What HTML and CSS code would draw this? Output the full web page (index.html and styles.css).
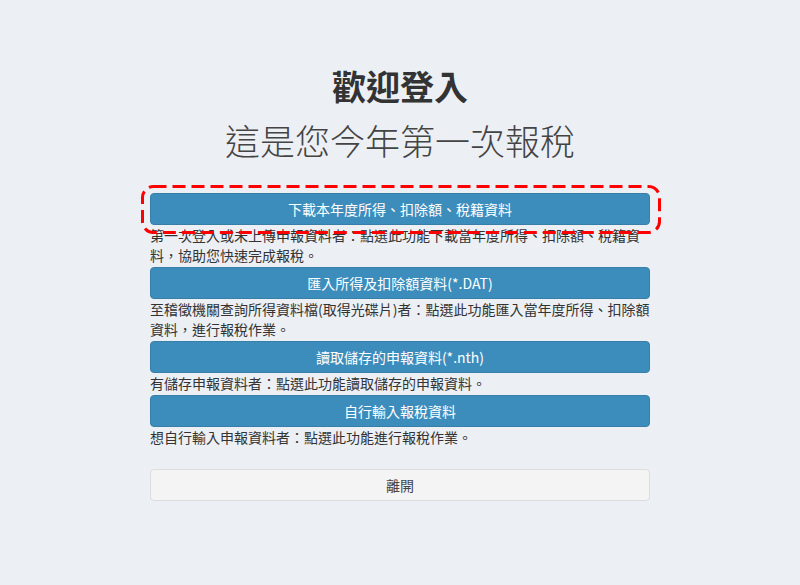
FILE: index.html
```html
<!DOCTYPE html>
<html lang="zh-Hant">
<head>
    <meta charset="UTF-8">
    <meta name="viewport" content="width=device-width, initial-scale=1.0">
    <title>歡迎登入</title>
    <link rel="stylesheet" href="styles.css">
</head>
<body>
    <main class="welcome">
        <h1 class="welcome-title">歡迎登入</h1>
        <h2 class="welcome-sub">這是您今年第一次報稅</h2>

        <section class="choices">
            <div class="choice-highlight">
                <button class="btn btn-primary">下載本年度所得、扣除額、稅籍資料</button>
                <!-- dashed ring marking the recommended option -->
                <svg class="highlight-ring" viewBox="0 0 520 49" preserveAspectRatio="none">
                    <rect x="1.5" y="1.5" width="517" height="46" rx="11" ry="11"
                          fill="none" stroke="#f00" stroke-width="3" stroke-dasharray="13 6"/>
                </svg>
            </div>
            <p class="choice-desc">第一次登入或未上傳申報資料者：點選此功能下載當年度所得、扣除額、稅籍資料，協助您快速完成報稅。</p>

            <button class="btn btn-primary">匯入所得及扣除額資料(*.DAT)</button>
            <p class="choice-desc">至稽徵機關查詢所得資料檔(取得光碟片)者：點選此功能匯入當年度所得、扣除額資料，進行報稅作業。</p>

            <button class="btn btn-primary">讀取儲存的申報資料(*.nth)</button>
            <p class="choice-desc">有儲存申報資料者：點選此功能讀取儲存的申報資料。</p>

            <button class="btn btn-primary">自行輸入報稅資料</button>
            <p class="choice-desc">想自行輸入申報資料者：點選此功能進行報稅作業。</p>

            <button class="btn btn-default btn-leave">離開</button>
        </section>
    </main>
</body>
</html>
```

FILE: styles.css
```css
html, body {
    margin: 0;
    padding: 0;
    background: #ecf0f5;
    color: #333;
    font-family: "Noto Sans CJK TC", "Liberation Sans", sans-serif;
    font-size: 14px;
}

.welcome {
    width: 500px;
    margin: 0 auto;
    padding-top: 66px;
    display: flex;
    flex-direction: column;
    align-items: center;
}

.welcome-title {
    margin: 0;
    font-size: 34px;
    font-weight: bold;
    line-height: 40px;
    color: #333;
}

.welcome-sub {
    margin: 12px 0 0 0;
    font-size: 35px;
    font-weight: 300;
    line-height: 44px;
    color: #444;
}

.choices {
    width: 100%;
    margin-top: 31px;
    display: flex;
    flex-direction: column;
}

.btn {
    display: block;
    width: 100%;
    height: 32px;
    padding: 0 12px;
    border-radius: 4px;
    font-family: inherit;
    font-size: 14px;
    line-height: 30px;
    cursor: pointer;
}

.btn-primary {
    background: #3c8dbc;
    border: 1px solid #367fa9;
    color: #fff;
}

.btn-primary:hover {
    background: #367fa9;
}

.btn-default {
    background: #f4f4f4;
    border: 1px solid #ddd;
    color: #444;
}

.btn-leave {
    margin-top: 20px;
}

.choice-desc {
    margin: 0 0 2px 0;
    line-height: 20px;
    color: #333;
}

.choice-highlight {
    position: relative;
}

.highlight-ring {
    position: absolute;
    top: -8px;
    left: -9px;
    width: 520px;
    height: 49px;
    pointer-events: none;
}
```
